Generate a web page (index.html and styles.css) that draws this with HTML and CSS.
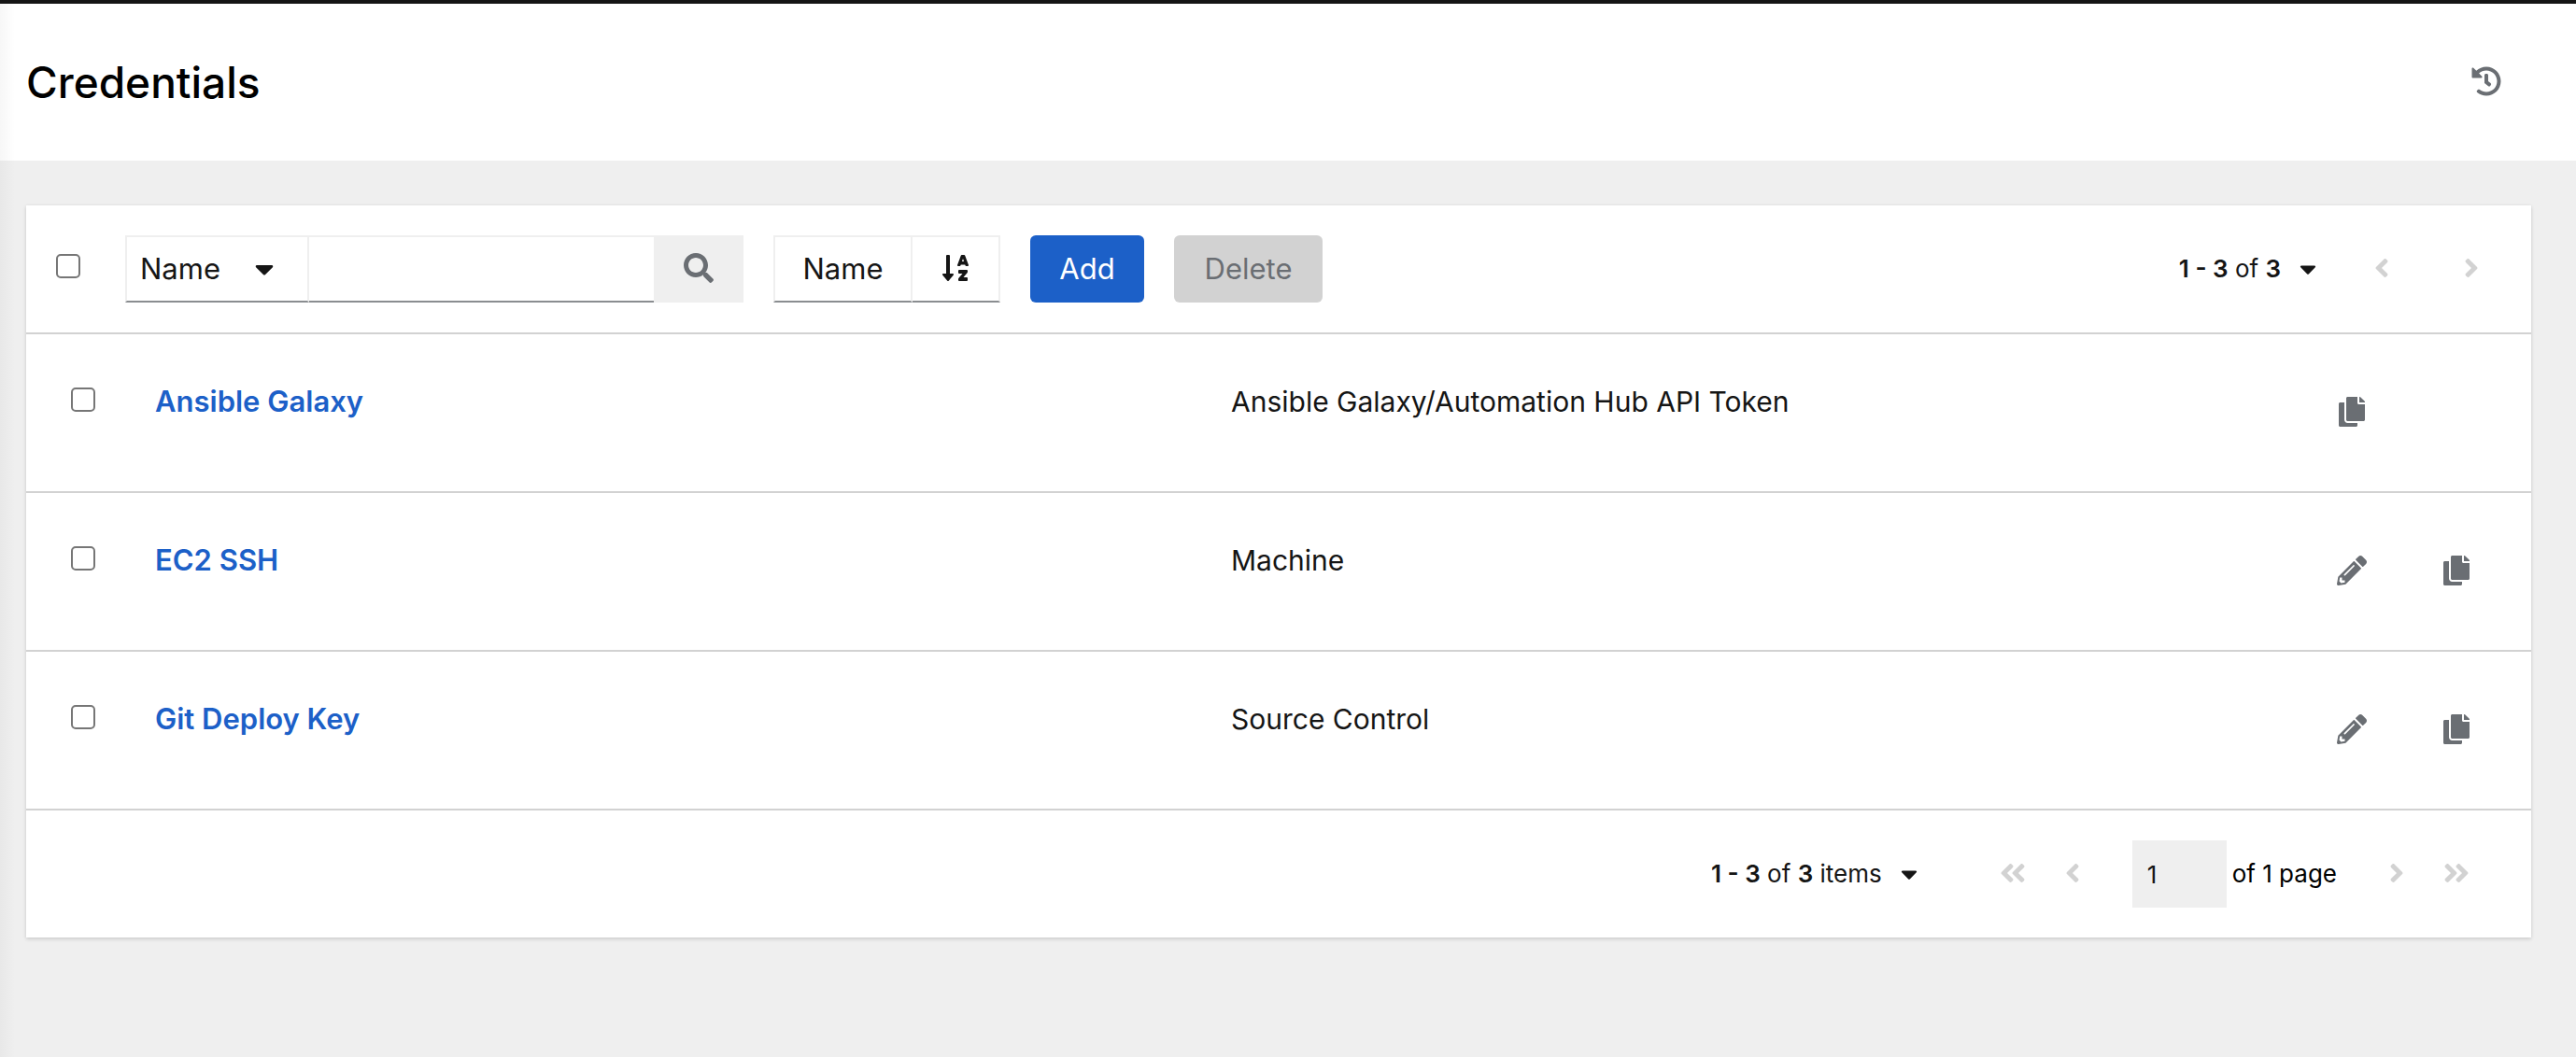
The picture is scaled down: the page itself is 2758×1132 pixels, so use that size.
FILE: index.html
```
<!DOCTYPE html>
<html lang="en">
<head>
  <meta charset="utf-8">
  <meta name="viewport" content="width=device-width, initial-scale=1">
  <title>Credentials</title>
  <link rel="stylesheet" href="styles.css">
</head>
<body>
  <svg class="sprite" aria-hidden="true">
    <symbol id="i-history" viewBox="0 0 512 512"><path d="M504 255.531c.253 136.64-111.18 248.372-247.82 248.468-59.015.042-113.223-20.53-155.822-54.911-11.077-8.94-11.905-25.541-1.839-35.607l11.267-11.267c8.609-8.609 22.353-9.551 31.891-1.984C173.062 425.135 212.781 440 256 440c101.705 0 184-82.311 184-184 0-101.705-82.311-184-184-184-48.814 0-93.149 18.969-126.068 49.932l50.754 50.754c10.08 10.08 2.941 27.314-11.313 27.314H24c-8.837 0-16-7.163-16-16V38.627c0-14.254 17.234-21.393 27.314-11.314l49.372 49.372C129.209 34.136 189.552 8 256 8c136.81 0 247.747 110.78 248 247.531zm-180.912 78.784l9.823-12.63c8.138-10.463 6.253-25.542-4.21-33.679L288 256.349V152c0-13.255-10.745-24-24-24h-16c-13.255 0-24 10.745-24 24v135.651l65.409 50.874c10.463 8.137 25.541 6.253 33.679-4.21z"/></symbol>
    <symbol id="i-search" viewBox="0 0 512 512"><path d="M505 442.7L405.3 343c-4.5-4.5-10.6-7-17-7H372c27.6-35.3 44-79.7 44-128C416 93.1 322.9 0 208 0S0 93.1 0 208s93.1 208 208 208c48.3 0 92.7-16.4 128-44v16.3c0 6.4 2.5 12.5 7 17l99.7 99.7c9.4 9.4 24.6 9.4 33.9 0l28.3-28.3c9.4-9.4 9.4-24.6.1-34zM208 336c-70.7 0-128-57.2-128-128 0-70.7 57.2-128 128-128 70.7 0 128 57.2 128 128 0 70.7-57.2 128-128 128z"/></symbol>
    <symbol id="i-copy" viewBox="0 0 448 512"><path d="M320 448v40c0 13.255-10.745 24-24 24H24c-13.255 0-24-10.745-24-24V120c0-13.255 10.745-24 24-24h72v296c0 30.879 25.121 56 56 56h168zm0-344V0H152c-13.255 0-24 10.745-24 24v368c0 13.255 10.745 24 24 24h272c13.255 0 24-10.745 24-24V128H344c-13.2 0-24-10.8-24-24zm120.971-31.029L375.029 7.029A24 24 0 0 0 358.059 0H352v96h96v-6.059a24 24 0 0 0-7.029-16.97z"/></symbol>
    <symbol id="i-pencil" viewBox="0 0 512 512"><path d="M497.9 142.1l-46.1 46.1c-4.7 4.7-12.3 4.7-17 0l-111-111c-4.7-4.7-4.7-12.3 0-17l46.1-46.1c18.7-18.7 49.1-18.7 67.9 0l60.1 60.1c18.8 18.7 18.8 49.1 0 67.9zM284.2 99.8L21.6 362.4.4 483.9c-2.9 16.4 11.4 30.6 27.8 27.8l121.5-21.3 262.6-262.6c4.7-4.7 4.7-12.3 0-17l-111-111c-4.8-4.7-12.4-4.7-17.1 0zM124.1 339.9c-5.5-5.5-5.5-14.3 0-19.8l154-154c5.5-5.5 14.3-5.5 19.8 0s5.5 14.3 0 19.8l-154 154c-5.5 5.5-14.3 5.5-19.8 0zM88 424h48v36.3l-64.5 11.3-31.1-31.1L51.7 376H88v48z"/></symbol>
    <symbol id="i-caret" viewBox="0 0 320 512"><path d="M31.3 192h257.3c17.8 0 26.7 21.5 14.1 34.1L174.1 354.8c-7.8 7.8-20.5 7.8-28.3 0L17.2 226.1C4.6 213.5 13.5 192 31.3 192z"/></symbol>
    <symbol id="i-sort" viewBox="0 0 448 512"><path d="M176 352h-48V48a16 16 0 0 0-16-16H80a16 16 0 0 0-16 16v304H16c-14.19 0-21.36 17.24-11.29 27.31l80 96a16 16 0 0 0 22.62 0l80-96C197.35 369.26 190.22 352 176 352zm240-64H288a16 16 0 0 0-16 16v32a16 16 0 0 0 16 16h56l-61.26 70.45A32 32 0 0 0 272 446.37V464a16 16 0 0 0 16 16h128a16 16 0 0 0 16-16v-32a16 16 0 0 0-16-16h-56l61.26-70.45A32 32 0 0 0 432 321.63V304a16 16 0 0 0-16-16zm31.06-85.38l-59.27-160A16 16 0 0 0 372.72 32h-41.44a16 16 0 0 0-15.07 10.62l-59.27 160A16 16 0 0 0 272 224h24.83a16 16 0 0 0 15.23-11.08l4.42-12.92h71l4.41 12.92A16 16 0 0 0 407.16 224H432a16 16 0 0 0 15.06-21.38zM335.61 144L352 96l16.39 48z"/></symbol>
    <symbol id="i-left" viewBox="0 0 256 512"><path d="M31.7 239l136-136c9.4-9.4 24.6-9.4 33.9 0l22.6 22.6c9.4 9.4 9.4 24.6 0 33.9L127.9 256l96.4 96.4c9.4 9.4 9.4 24.6 0 33.9L201.7 409c-9.4 9.4-24.6 9.4-33.9 0l-136-136c-9.5-9.4-9.5-24.6-.1-34z"/></symbol>
    <symbol id="i-right" viewBox="0 0 256 512"><path d="M224.3 273l-136 136c-9.4 9.4-24.6 9.4-33.9 0l-22.6-22.6c-9.4-9.4-9.4-24.6 0-33.9l96.4-96.4-96.4-96.4c-9.4-9.4-9.4-24.6 0-33.9L54.3 103c9.4-9.4 24.6-9.4 33.9 0l136 136c9.5 9.4 9.5 24.6.1 34z"/></symbol>
    <symbol id="i-first" viewBox="0 0 448 512"><path d="M223.7 239l136-136c9.4-9.4 24.6-9.4 33.9 0l22.6 22.6c9.4 9.4 9.4 24.6 0 33.9L319.9 256l96.4 96.4c9.4 9.4 9.4 24.6 0 33.9L393.7 409c-9.4 9.4-24.6 9.4-33.9 0l-136-136c-9.5-9.4-9.5-24.6-.1-34zm-192 34l136 136c9.4 9.4 24.6 9.4 33.9 0l22.6-22.6c9.4-9.4 9.4-24.6 0-33.9L127.9 256l96.4-96.4c9.4-9.4 9.4-24.6 0-33.9L201.7 103c-9.4-9.4-24.6-9.4-33.9 0l-136 136c-9.5 9.4-9.5 24.6-.1 34z"/></symbol>
    <symbol id="i-last" viewBox="0 0 448 512"><path d="M224.3 273l-136 136c-9.4 9.4-24.6 9.4-33.9 0l-22.6-22.6c-9.4-9.4-9.4-24.6 0-33.9l96.4-96.4-96.4-96.4c-9.4-9.4-9.4-24.6 0-33.9L54.3 103c9.4-9.4 24.6-9.4 33.9 0l136 136c9.5 9.4 9.5 24.6.1 34zm192-34l-136-136c-9.4-9.4-24.6-9.4-33.9 0l-22.6 22.6c-9.4 9.4-9.4 24.6 0 33.9l96.4 96.4-96.4 96.4c-9.4 9.4-9.4 24.6 0 33.9l22.6 22.6c9.4 9.4 24.6 9.4 33.9 0l136-136c9.4-9.2 9.4-24.4 0-33.8z"/></symbol>
  </svg>

  <div class="page">
    <header class="page-header">
      <h1 class="page-title">Credentials</h1>
      <button class="icon-button" type="button" aria-label="View activity stream"><svg class="icon"><use href="#i-history"/></svg></button>
    </header>

    <main class="page-main">
      <section class="card" aria-label="Credentials list">
        <div class="toolbar">
          <label class="select-all"><input class="checkbox" type="checkbox" aria-label="Select all"></label>

          <form class="search" role="search">
            <div class="search-key">
              <select class="search-select" aria-label="Search key"><option>Name</option></select>
              <svg class="search-caret"><use href="#i-caret"/></svg>
            </div>
            <input class="search-input" type="search" aria-label="Search text">
            <button class="search-button" type="submit" aria-label="Search"><svg class="icon"><use href="#i-search"/></svg></button>
          </form>

          <div class="sort">
            <button class="sort-key" type="button">Name</button>
            <button class="sort-order" type="button" aria-label="Sort ascending"><svg class="icon icon-narrow"><use href="#i-sort"/></svg></button>
          </div>

          <button class="button button-primary" type="button">Add</button>
          <button class="button button-delete" type="button" disabled>Delete</button>

          <nav class="pagination pagination-top" aria-label="Top pagination">
            <button class="range" type="button"><span><b>1 - 3</b> of <b>3</b></span><svg class="range-caret"><use href="#i-caret"/></svg></button>
            <div class="pager pager-spaced">
              <button class="pager-button" type="button" disabled aria-label="Previous page"><svg class="icon-angle"><use href="#i-left"/></svg></button>
              <button class="pager-button" type="button" disabled aria-label="Next page"><svg class="icon-angle"><use href="#i-right"/></svg></button>
            </div>
          </nav>
        </div>

        <table class="list" aria-label="Credentials">
          <colgroup><col class="col-check"><col><col><col class="col-actions"></colgroup>
          <tbody>
            <tr>
              <td class="cell-check"><input class="checkbox" type="checkbox" aria-label="Select Ansible Galaxy"></td>
              <td><a class="name" href="#ansible-galaxy">Ansible Galaxy</a></td>
              <td>Ansible Galaxy/Automation Hub API Token</td>
              <td><div class="actions">
                <button class="icon-button" type="button" aria-label="Copy"><svg class="icon icon-narrow"><use href="#i-copy"/></svg></button>
              </div></td>
            </tr>
            <tr>
              <td class="cell-check"><input class="checkbox" type="checkbox" aria-label="Select EC2 SSH"></td>
              <td><a class="name" href="#ec2-ssh">EC2 SSH</a></td>
              <td>Machine</td>
              <td><div class="actions">
                <button class="icon-button" type="button" aria-label="Edit"><svg class="icon"><use href="#i-pencil"/></svg></button>
                <button class="icon-button" type="button" aria-label="Copy"><svg class="icon icon-narrow"><use href="#i-copy"/></svg></button>
              </div></td>
            </tr>
            <tr>
              <td class="cell-check"><input class="checkbox" type="checkbox" aria-label="Select Git Deploy Key"></td>
              <td><a class="name" href="#git-deploy-key">Git Deploy Key</a></td>
              <td>Source Control</td>
              <td><div class="actions">
                <button class="icon-button" type="button" aria-label="Edit"><svg class="icon"><use href="#i-pencil"/></svg></button>
                <button class="icon-button" type="button" aria-label="Copy"><svg class="icon icon-narrow"><use href="#i-copy"/></svg></button>
              </div></td>
            </tr>
          </tbody>
        </table>

        <nav class="pagination pagination-bottom" aria-label="Bottom pagination">
          <button class="range" type="button"><span><b>1 - 3</b> of <b>3</b> items</span><svg class="range-caret"><use href="#i-caret"/></svg></button>
          <div class="pager">
            <button class="pager-button" type="button" disabled aria-label="First page"><svg class="icon icon-narrow"><use href="#i-first"/></svg></button>
            <button class="pager-button" type="button" disabled aria-label="Previous page"><svg class="icon-angle"><use href="#i-left"/></svg></button>
          </div>
          <label class="page-select"><input class="page-input" type="text" inputmode="numeric" value="1"><span>of 1 page</span></label>
          <div class="pager">
            <button class="pager-button" type="button" disabled aria-label="Next page"><svg class="icon-angle"><use href="#i-right"/></svg></button>
            <button class="pager-button" type="button" disabled aria-label="Last page"><svg class="icon icon-narrow"><use href="#i-last"/></svg></button>
          </div>
        </nav>
      </section>
    </main>
  </div>
</body>
</html>
```
FILE: styles.css
```
:root {
  --text: #151515;
  --muted: #6a6e73;
  --light: #d2d2d2;
  --surface: #efefef;
  --edge: #8a8d90;
  --blue: #1c60c8;
}

* { box-sizing: border-box; }

body {
  margin: 0;
  background: var(--surface);
  color: var(--text);
  font: 400 31px/48px Inter, "Open Sans", sans-serif;
}

button, input, select {
  margin: 0;
  padding: 0;
  border: 0;
  border-radius: 0;
  background: none;
  color: inherit;
  font: inherit;
  appearance: none;
}

svg { display: block; fill: currentColor; }

.sprite { display: none; }

.icon { width: 32px; height: 32px; }
.icon-narrow { width: 28px; }
.icon-angle { width: 16px; height: 32px; }

/* Page frame */
.page {
  position: relative;
  min-height: 100vh;
  border-top: 4px solid var(--text);
}

/* Shade cast by the edge of the navigation */
.page::before {
  content: "";
  position: absolute;
  inset: 0 auto 0 0;
  width: 16px;
  background: linear-gradient(to right, rgba(3, 3, 3, .03), rgba(3, 3, 3, 0));
}

.page-header {
  display: flex;
  align-items: center;
  justify-content: space-between;
  padding: 48px 48px 48px 28px;
  background: #fff;
}

.page-title {
  margin: 0;
  color: #000;
  font-size: 46px;
  font-weight: 500;
  line-height: 64px;
}

.icon-button {
  display: flex;
  align-items: center;
  justify-content: center;
  width: 96px;
  height: 72px;
  padding-bottom: 2px;
  color: var(--muted);
}

.page-main { padding: 48px 48px 48px 28px; }

.card {
  background: #fff;
  box-shadow: 0 2px 4px rgba(3, 3, 3, .12), 0 0 4px rgba(3, 3, 3, .06);
}

/* Toolbar */
.toolbar {
  display: flex;
  align-items: center;
  gap: 32px;
  padding: 32px;
  border-bottom: 2px solid var(--light);
}

.checkbox {
  display: block;
  width: 26px;
  height: 26px;
  border: 2px solid #767676;
  border-radius: 5px;
  background: #fff;
}

.select-all { padding: 0 16px 6px 0; }

.search, .sort { display: flex; height: 72px; }

.search-key { position: relative; width: 197px; }

.search-select {
  width: 100%;
  height: 100%;
  padding: 0 14px;
  border: 2px solid var(--surface);
  border-bottom-color: var(--edge);
}

.search-caret {
  position: absolute;
  top: 20px;
  right: 38px;
  width: 20px;
  height: 32px;
  pointer-events: none;
}

.search-input {
  width: 369px;
  padding: 0 16px;
  border-top: 2px solid var(--surface);
  border-bottom: 2px solid var(--edge);
}

.search-button {
  display: flex;
  align-items: center;
  justify-content: center;
  width: 96px;
  padding-bottom: 2px;
  background: var(--surface);
  color: var(--muted);
}

.sort-key, .sort-order {
  display: flex;
  align-items: center;
  justify-content: center;
  border: 2px solid var(--surface);
  border-bottom-color: var(--edge);
}

.sort-key { width: 149px; }
.sort-order { width: 94px; padding-bottom: 2px; border-left: 0; }

.button { height: 72px; border-radius: 6px; }

.button-primary {
  width: 122px;
  background: var(--blue);
  color: #fff;
}

.button-delete {
  width: 159px;
  background: var(--light);
  color: var(--muted);
}

/* Pagination */
.pagination {
  display: flex;
  align-items: center;
  font-size: 26px;
}

.pagination-top { gap: 38px; margin-left: auto; }

.pagination-bottom {
  justify-content: flex-end;
  gap: 32px;
  padding: 32px 48px 32px 32px;
}

.range {
  display: flex;
  align-items: center;
  gap: 20px;
  height: 72px;
}

.range b { font-weight: 600; }

.range-caret { width: 18px; height: 28px; }

.pagination-bottom .range { margin-right: 38px; }

.pager { display: flex; }
.pager-spaced { gap: 32px; }

.pager-button {
  display: flex;
  align-items: center;
  justify-content: center;
  width: 64px;
  height: 72px;
  padding-bottom: 2px;
  color: var(--light);
}

.page-select {
  display: flex;
  align-items: center;
  gap: 6px;
  color: #000;
}

.page-input {
  width: 101px;
  height: 72px;
  padding: 0 16px;
  background: var(--surface);
  color: var(--text);
}

/* List */
.list {
  width: 100%;
  table-layout: fixed;
  border-spacing: 0;
  font-size: 30px;
}

.col-check { width: 138px; }
.col-actions { width: 240px; }

.list td {
  padding: 48px 0;
  border-bottom: 2px solid var(--light);
  vertical-align: top;
}

.list .cell-check { padding: 57px 0 0 48px; }

.name {
  color: var(--blue);
  font-size: 31px;
  font-weight: 600;
  text-decoration: none;
}

.actions { display: flex; gap: 16px; }
```
